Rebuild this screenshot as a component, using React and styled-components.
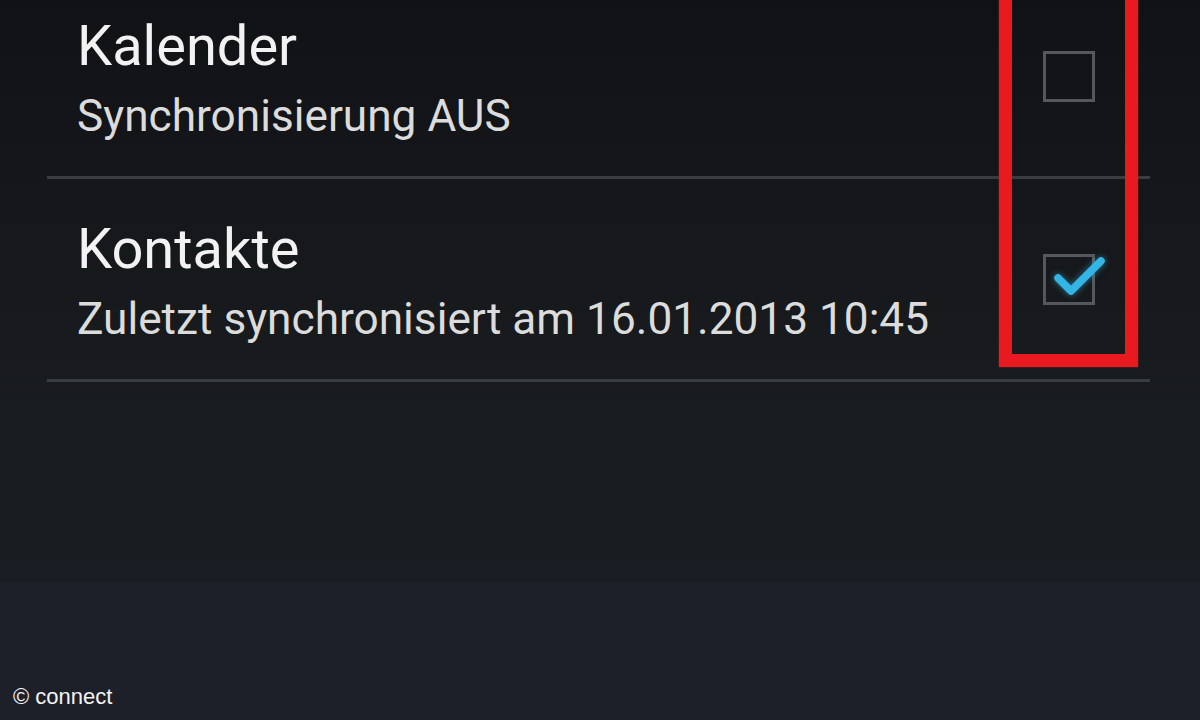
import React from 'react';
import styled, { createGlobalStyle } from 'styled-components';

const GlobalStyle = createGlobalStyle`
    html, body {
        margin: 0;
        padding: 0;
        background: #111316;
    }
    body {
        font-family: Roboto, "Noto Sans", "Liberation Sans", sans-serif;
    }
`

const Screen = styled.div`
    position: relative;
    width: 1200px;
    height: 720px;
    overflow: hidden;
    background: linear-gradient(
        to bottom,
        #101215 0%,
        #15171a 30%,
        #1a1d1f 60%,
        #1a1d20 77.5%,
        #1b1d24 78%,
        #1b1d24 80.8%,
        #1d2028 81%,
        #1d2028 100%
    );
`

const List = styled.div`
    display: flex;
    flex-direction: column;
    margin: -24px 50px 0 47px;
`

const Row = styled.div`
    display: flex;
    align-items: center;
    justify-content: space-between;
    height: 200px;
    padding-left: 30px;
    padding-right: 55px;
    border-bottom: 3px solid #3a3d40;
`

const TextBlock = styled.div`
    display: flex;
    flex-direction: column;
    padding-top: 8px;
`

const Title = styled.div`
    color: #f2f2f2;
    font-size: 56px;
    line-height: 64px;
`

const Summary = styled.div`
    margin-top: 8px;
    color: #dcdcdc;
    font-size: 44.2px;
    line-height: 60px;
`

const Box = styled.div`
    position: relative;
    width: 46px;
    height: 45px;
    border: 3px solid #55585b;
`

const Check = styled.svg`
    position: absolute;
    left: 6px;
    top: -2px;
    overflow: visible;
    filter: drop-shadow(0 0 3px rgba(51, 181, 229, 0.6));
`

const Marker = styled.div`
    position: absolute;
    left: 999px;
    top: -20px;
    width: 113px;
    height: 361px;
    border: 13px solid #e8191f;
    box-shadow: 0 0 2px rgba(232, 25, 31, 0.6);
    pointer-events: none;
`

const Credit = styled.div`
    position: absolute;
    left: 13px;
    bottom: 10px;
    color: #f4f4f4;
    font-family: "Liberation Sans", Arial, sans-serif;
    font-size: 22px;
`

const items = [
    { title: 'Kalender', summary: 'Synchronisierung AUS', checked: false },
    { title: 'Kontakte', summary: 'Zuletzt synchronisiert am 16.01.2013 10:45', checked: true },
]

const App = () => {
    return (
        <Screen>
            <GlobalStyle />
            <List>
                {items.map((item, index) => (
                    <Row key={index}>
                        <TextBlock>
                            <Title>{item.title}</Title>
                            <Summary>{item.summary}</Summary>
                        </TextBlock>
                        <Box>
                            {item.checked && (
                                <Check width="46" height="40" viewBox="0 0 46 40">
                                    <path
                                        d="M6 23 L19 36 L49 6"
                                        fill="none"
                                        stroke="#33b5e5"
                                        strokeWidth="7.5"
                                        strokeLinecap="round"
                                        strokeLinejoin="round"
                                    />
                                </Check>
                            )}
                        </Box>
                    </Row>
                ))}
            </List>
            <Marker />
            <Credit>© connect</Credit>
        </Screen>
    )
}

export default App
